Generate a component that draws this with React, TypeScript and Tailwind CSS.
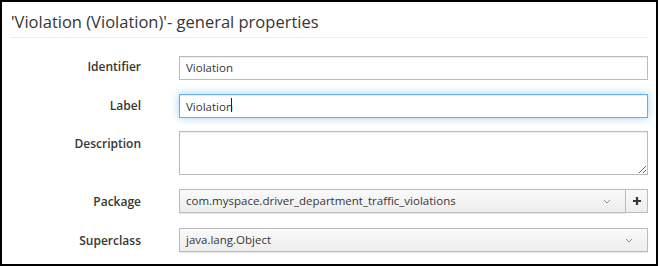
import React from "react";

const font = { fontFamily: '"Open Sans", "Noto Sans", sans-serif' };

const Row = ({ label, children, className = "" }: { label: string; children: React.ReactNode; className?: string }) => (
  <div className={"flex items-start " + className}>
    <div className="w-[131px] shrink-0 text-right text-[12px] font-semibold text-[#363636] pt-[4px]">{label}</div>
    <div className="ml-[38px] flex-1">{children}</div>
  </div>
);

const Chevron = () => (
  <svg width="8" height="5" viewBox="0 0 8 5" className="shrink-0">
    <path d="M1 1l3 3 3-3" fill="none" stroke="#8b8d8f" strokeWidth="1" />
  </svg>
);

const Select = ({ value, className = "" }: { value: string; className?: string }) => (
  <div
    className={
      "h-[24px] flex items-center justify-between pl-[6px] pr-[14px] border border-[#bbb] bg-gradient-to-b from-[#fafafa] to-[#ededed] shadow-[0_1px_1px_rgba(3,3,3,0.08)] text-[11.5px] text-[#363636] " +
      className
    }
  >
    <span>{value}</span>
    <Chevron />
  </div>
);

export default function App() {
  return (
    <div style={font} className="w-[658px] h-[266px] border-2 border-black bg-white pl-[8px] pr-[8px] pt-[8px] text-[#363636]">
      <h3 className="text-[16.5px] leading-[24px] font-normal text-[#363636] pl-[1px]">
        'Violation (Violation)'- general properties
      </h3>
      <div className="mt-[3px] border-t border-[#ececec]" />
      <div className="mt-[16px] flex flex-col">
        <Row label="Identifier">
          <input
            readOnly
            value="Violation"
            className="w-full h-[24px] px-[6px] border border-[#bbb] shadow-[inset_0_1px_1px_rgba(0,0,0,0.075)] text-[11.5px] text-[#363636] outline-none"
          />
        </Row>
        <Row label="Label" className="mt-[13px]">
          <div className="relative">
            <input
              readOnly
              value="Violation"
              className="w-full h-[24px] px-[6px] border border-[#66afe9] shadow-[inset_0_1px_1px_rgba(0,0,0,0.075),0_0_8px_rgba(102,175,233,0.6)] text-[11.5px] text-[#363636] outline-none"
            />
            <span className="absolute left-[52px] top-[5px] w-px h-[14px] bg-[#222]" />
          </div>
        </Row>
        <Row label="Description" className="mt-[13px]">
          <textarea
            readOnly
            className="block w-full h-[44px] px-[6px] border border-[#bbb] shadow-[inset_0_1px_1px_rgba(0,0,0,0.075)] text-[11.5px] outline-none"
          />
        </Row>
        <Row label="Package" className="mt-[14px]">
          <div className="flex">
            <Select value="com.myspace.driver_department_traffic_violations" className="flex-1" />
            <button className="w-[23px] h-[24px] -ml-px border border-[#bbb] bg-gradient-to-b from-[#fafafa] to-[#ededed] flex items-center justify-center">
              <svg width="10" height="10" viewBox="0 0 10 10">
                <path d="M5 1v8M1 5h8" stroke="#363636" strokeWidth="2.2" />
              </svg>
            </button>
          </div>
        </Row>
        <Row label="Superclass" className="mt-[15px]">
          <Select value="java.lang.Object" />
        </Row>
      </div>
    </div>
  );
}
